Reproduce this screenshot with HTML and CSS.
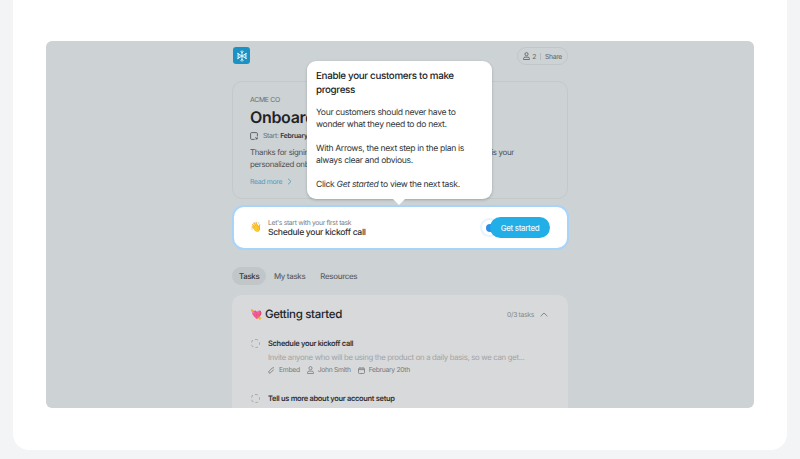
FILE: index.html
```html
<!DOCTYPE html>
<html lang="en">
<head>
  <meta charset="UTF-8" />
  <title>Onboarding - Arrows</title>
  <link rel="stylesheet" href="styles.css">
</head>
<body>
  <div class="sheet">
    <div class="stage">
      <div class="plan">

        <!-- Top bar -->
        <header class="topbar">
          <div class="logo">
            <svg width="12" height="12" viewBox="0 0 12 12" fill="none" stroke="#e6f6fc" stroke-width="1" stroke-linecap="round">
              <path d="M6 .8v10.400M1.500 3.400l9 5.200M1.500 8.600l9-5.200" />
              <path d="M4.700 1.600 6 2.900l1.300-1.300M4.700 10.400 6 9.100l1.300 1.300M1.300 5l1.800.5-.5-1.800M10.700 5l-1.800.5.5-1.800M1.300 7l1.800-.5-.5 1.800M10.700 7l-1.800-.5.5 1.800" stroke-width=".8" />
            </svg>
          </div>
          <div class="share">
            <svg width="7" height="8" viewBox="0 0 8 9" fill="none" stroke="#5f6468" stroke-width="1">
              <circle cx="4" cy="2.400" r="1.800" />
              <path d="M.6 8.500V7.400c0-1 .8-1.600 1.700-1.600h3.400c.9 0 1.700.6 1.700 1.600v1.100z" />
            </svg>
            <span>2</span>
            <span class="share-sep"></span>
            <span>Share</span>
          </div>
        </header>

        <!-- Intro card -->
        <section class="intro">
          <div class="company">ACME CO</div>
          <h1>Onboarding plan</h1>
          <div class="start">
            <svg width="8" height="8" viewBox="0 0 8 8" fill="none" stroke="#55595d" stroke-width=".9">
              <path d="M7.400 4.400V1.600C7.400 1 7 .6 6.400.6H1.600C1 .6.6 1 .6 1.600v4.800c0 .6.4 1 1 1h3" />
              <path d="M5.400 5.200 7.200 7M7.200 5.200v1.800H5.400" />
            </svg>
            <span>Start: <strong>February 14th</strong></span>
          </div>
          <p>Thanks for signing up for Arrows! We're excited to work with you. This is your<br>personalized onboarding plan.</p>
          <a class="read-more" href="#">Read more
            <svg width="5" height="7" viewBox="0 0 5 7" fill="none" stroke="#5aa6c6" stroke-width="1"><path d="M1 .7 4 3.500 1 6.300" /></svg>
          </a>
        </section>

        <!-- Next step -->
        <section class="next-step">
          <div class="wave">👋</div>
          <div class="next-text">
            <div class="next-label">Let's start with your first task</div>
            <div class="next-title">Schedule your kickoff call</div>
          </div>
          <div class="cta">
            <span class="beacon"><span class="beacon-dot"></span></span>
            <button class="get-started">Get started</button>
          </div>
        </section>

        <nav class="tabs">
          <span class="tab tab-active">Tasks</span>
          <span class="tab">My tasks</span>
          <span class="tab">Resources</span>
        </nav>

        <!-- Task list -->
        <section class="tasks">
          <div class="tasks-head">
            <h2><span class="emoji">💘</span> Getting started</h2>
            <div class="tasks-count">0/3 tasks
              <svg width="8" height="5" viewBox="0 0 8 5" fill="none" stroke="#85888a" stroke-width="1"><path d="M.6 4.300 4 1l3.400 3.300" /></svg>
            </div>
          </div>
          <div class="task">
            <span class="check"></span>
            <div class="task-body">
              <div class="task-title">Schedule your kickoff call</div>
              <div class="task-desc">Invite anyone who will be using the product on a daily basis, so we can get...</div>
              <div class="task-meta">
                <span class="meta-item">
                  <svg width="7" height="7" viewBox="0 0 7 7" fill="none" stroke="#77797b" stroke-width=".9"><path d="M6 1a1.200 1.200 0 0 0-1.700 0L1 4.300a1 1 0 0 0 1.500 1.500L5.700 2.600" /></svg>
                  Embed
                </span>
                <span class="meta-item">
                  <svg width="7" height="8" viewBox="0 0 8 9" fill="none" stroke="#77797b" stroke-width=".9"><circle cx="4" cy="2.400" r="1.800" /><path d="M.6 8.500V7.400c0-1 .8-1.600 1.700-1.600h3.400c.9 0 1.700.6 1.700 1.600v1.100z" /></svg>
                  John Smith
                </span>
                <span class="meta-item">
                  <svg width="7" height="7" viewBox="0 0 7 7" fill="none" stroke="#77797b" stroke-width=".8"><rect x=".5" y="1.100" width="6" height="5.400" rx="1" /><path d="M.5 2.600h6M2 .2v1.400M5 .2v1.400" /></svg>
                  February 20th
                </span>
              </div>
            </div>
          </div>
          <div class="task task-last">
            <span class="check"></span>
            <div class="task-body">
              <div class="task-title">Tell us more about your account setup</div>
            </div>
          </div>
        </section>
      </div>

      <!-- Product tour tooltip -->
      <div class="tour">
        <h3>Enable your customers to make progress</h3>
        <p>Your customers should never have to wonder what they need to do next.</p>
        <p>With Arrows, the next step in the plan is always clear and obvious.</p>
        <p>Click <em>Get started</em> to view the next task.</p>
      </div>
    </div>
  </div>
</body>
</html>
```

FILE: styles.css
```css
html, body {
  height: 100%;
}

body {
  margin: 0;
  background: #f3f4f6;
  font-family: Inter, 'Liberation Sans', sans-serif;
  letter-spacing: -0.02em;
  text-rendering: geometricPrecision;
  color: #222528;
  overflow: hidden;
}

.sheet {
  box-sizing: border-box;
  width: 774px;
  height: 450px;
  margin-left: 13px;
  padding: 41px 33px 0;
  background: #fff;
  border-radius: 0 0 16px 16px;
}

.stage {
  position: relative;
  height: 367px;
  background: #cdd2d5;
  border-radius: 6px;
  overflow: hidden;
}

.plan {
  width: 336px;
  margin-left: 186px;
}

.topbar {
  display: flex;
  justify-content: space-between;
  align-items: flex-start;
  box-sizing: border-box;
  height: 40px;
  padding-top: 6px;
}

.logo {
  display: flex;
  align-items: center;
  justify-content: center;
  width: 17px;
  height: 17px;
  margin-left: 1px;
  background: #1c92c4;
  border-radius: 3px;
}

.share {
  display: flex;
  align-items: center;
  gap: 2px;
  box-sizing: border-box;
  height: 18px;
  padding: 0 5px;
  border: 1px solid #c1c6c9;
  border-radius: 9px;
  font-size: 6.800px;
  color: #5f6468;
}

.share-sep {
  width: 1px;
  height: 7px;
  margin: 0 2px;
  background: #b5babd;
}

.intro {
  box-sizing: border-box;
  height: 118px;
  padding: 13px 17px 0;
  border: 1px solid #c3c8cb;
  border-radius: 10px;
}

.company {
  font-size: 6.900px;
  line-height: 9px;
  color: #686c70;
}

h1 {
  margin: 3px 0 0;
  font-size: 16px;
  line-height: 20px;
  font-weight: 600;
  white-space: nowrap;
  color: #1f2225;
}

.start {
  display: flex;
  align-items: center;
  gap: 5px;
  margin-top: 4px;
  font-size: 6.900px;
  line-height: 10px;
  color: #686c70;
}

.start strong {
  font-weight: 600;
  color: #33373a;
}

.intro p {
  margin: 5px 0 0;
  font-size: 7.900px;
  line-height: 12.300px;
  white-space: nowrap;
  color: #4c5053;
}

.read-more {
  display: flex;
  align-items: center;
  gap: 5px;
  margin-top: 6px;
  font-size: 6.900px;
  line-height: 10px;
  color: #4e9cbd;
  text-decoration: none;
}

.next-step {
  display: flex;
  align-items: center;
  box-sizing: border-box;
  width: 337px;
  height: 45px;
  margin-top: 6px;
  padding: 0 17px 0 16px;
  background: #fff;
  border: 2px solid #a9d3f7;
  border-radius: 12px;
}

.wave {
  width: 18px;
  font-size: 9.500px;
}

.next-text {
  flex: 1;
  padding-top: 1px;
}

.next-label {
  font-size: 6.800px;
  line-height: 9px;
  color: #777b7f;
}

.next-title {
  margin-top: 1px;
  font-size: 8.600px;
  line-height: 11px;
  font-weight: 500;
  color: #2f3336;
}

.cta {
  display: flex;
  align-items: center;
}

.beacon {
  display: flex;
  align-items: center;
  justify-content: center;
  box-sizing: border-box;
  width: 19px;
  height: 19px;
  margin-right: -9px;
  border: 2px solid #e8f3fd;
  border-radius: 50%;
}

.beacon-dot {
  width: 8px;
  height: 8px;
  background: #2f8fe8;
  border-radius: 50%;
}

.get-started {
  position: relative;
  width: 60px;
  height: 21px;
  padding: 0;
  border: 0;
  border-radius: 11px;
  background: #22aee6;
  font-family: inherit;
  letter-spacing: inherit;
  font-size: 7.900px;
  font-weight: 500;
  color: #eaf7fd;
}

.tabs {
  display: flex;
  margin-top: 17px;
}

.tab {
  padding: 0 7.500px;
  font-size: 7.900px;
  font-weight: 500;
  line-height: 18px;
  color: #5d6165;
  border-radius: 9px;
}

.tab-active {
  padding: 0 7px;
  background: #c1c6c9;
  color: #33373a;
}

.tasks {
  height: 130px;
  margin-top: 10px;
  padding: 10px 19px 0 18px;
  background: #d8d9da;
  border-radius: 10px 10px 0 0;
  overflow: hidden;
}

.tasks-head {
  display: flex;
  justify-content: space-between;
  align-items: center;
}

h2 {
  margin: 0;
  font-size: 11.500px;
  line-height: 18px;
  font-weight: 500;
  color: #232629;
}

.emoji {
  font-size: 10px;
}

.tasks-count {
  display: flex;
  align-items: center;
  gap: 6px;
  padding-right: 1px;
  font-size: 6.800px;
  color: #85888a;
}

.task {
  display: flex;
  gap: 8px;
  margin-top: 14px;
}

.task-last {
  margin-top: 17px;
}

.check {
  flex: none;
  box-sizing: border-box;
  width: 9px;
  height: 9px;
  margin: 1px 0 0 1px;
  border: 1px dashed #a5a7a8;
  border-radius: 50%;
}

.task-title {
  font-size: 7.500px;
  line-height: 12px;
  font-weight: 600;
  color: #313437;
}

.task-desc {
  margin-top: 1px;
  font-size: 7.800px;
  line-height: 12px;
  white-space: nowrap;
  color: #a2a3a5;
}

.task-meta {
  display: flex;
  gap: 7px;
  margin-top: 1px;
  font-size: 6.800px;
  line-height: 12px;
  color: #77797b;
}

.meta-item {
  display: flex;
  align-items: center;
  gap: 4px;
}

.tour {
  position: absolute;
  top: 20px;
  left: 261px;
  box-sizing: border-box;
  width: 185px;
  height: 138px;
  padding: 9px 14px 9px 9px;
  background: #fff;
  border-radius: 9px;
  box-shadow: 0 1px 3px rgba(0, 0, 0, 0.22);
  font-size: 8.600px;
  line-height: 12px;
  color: #33373a;
}

.tour::after {
  content: "";
  position: absolute;
  left: 86px;
  bottom: -6px;
  border-left: 6px solid transparent;
  border-right: 6px solid transparent;
  border-top: 6px solid #fff;
}

.tour h3 {
  margin: 0 0 9px;
  font-size: 9.800px;
  line-height: 14px;
  font-weight: 500;
  color: #202326;
}

.tour p {
  margin: 0 0 12px;
}
```
